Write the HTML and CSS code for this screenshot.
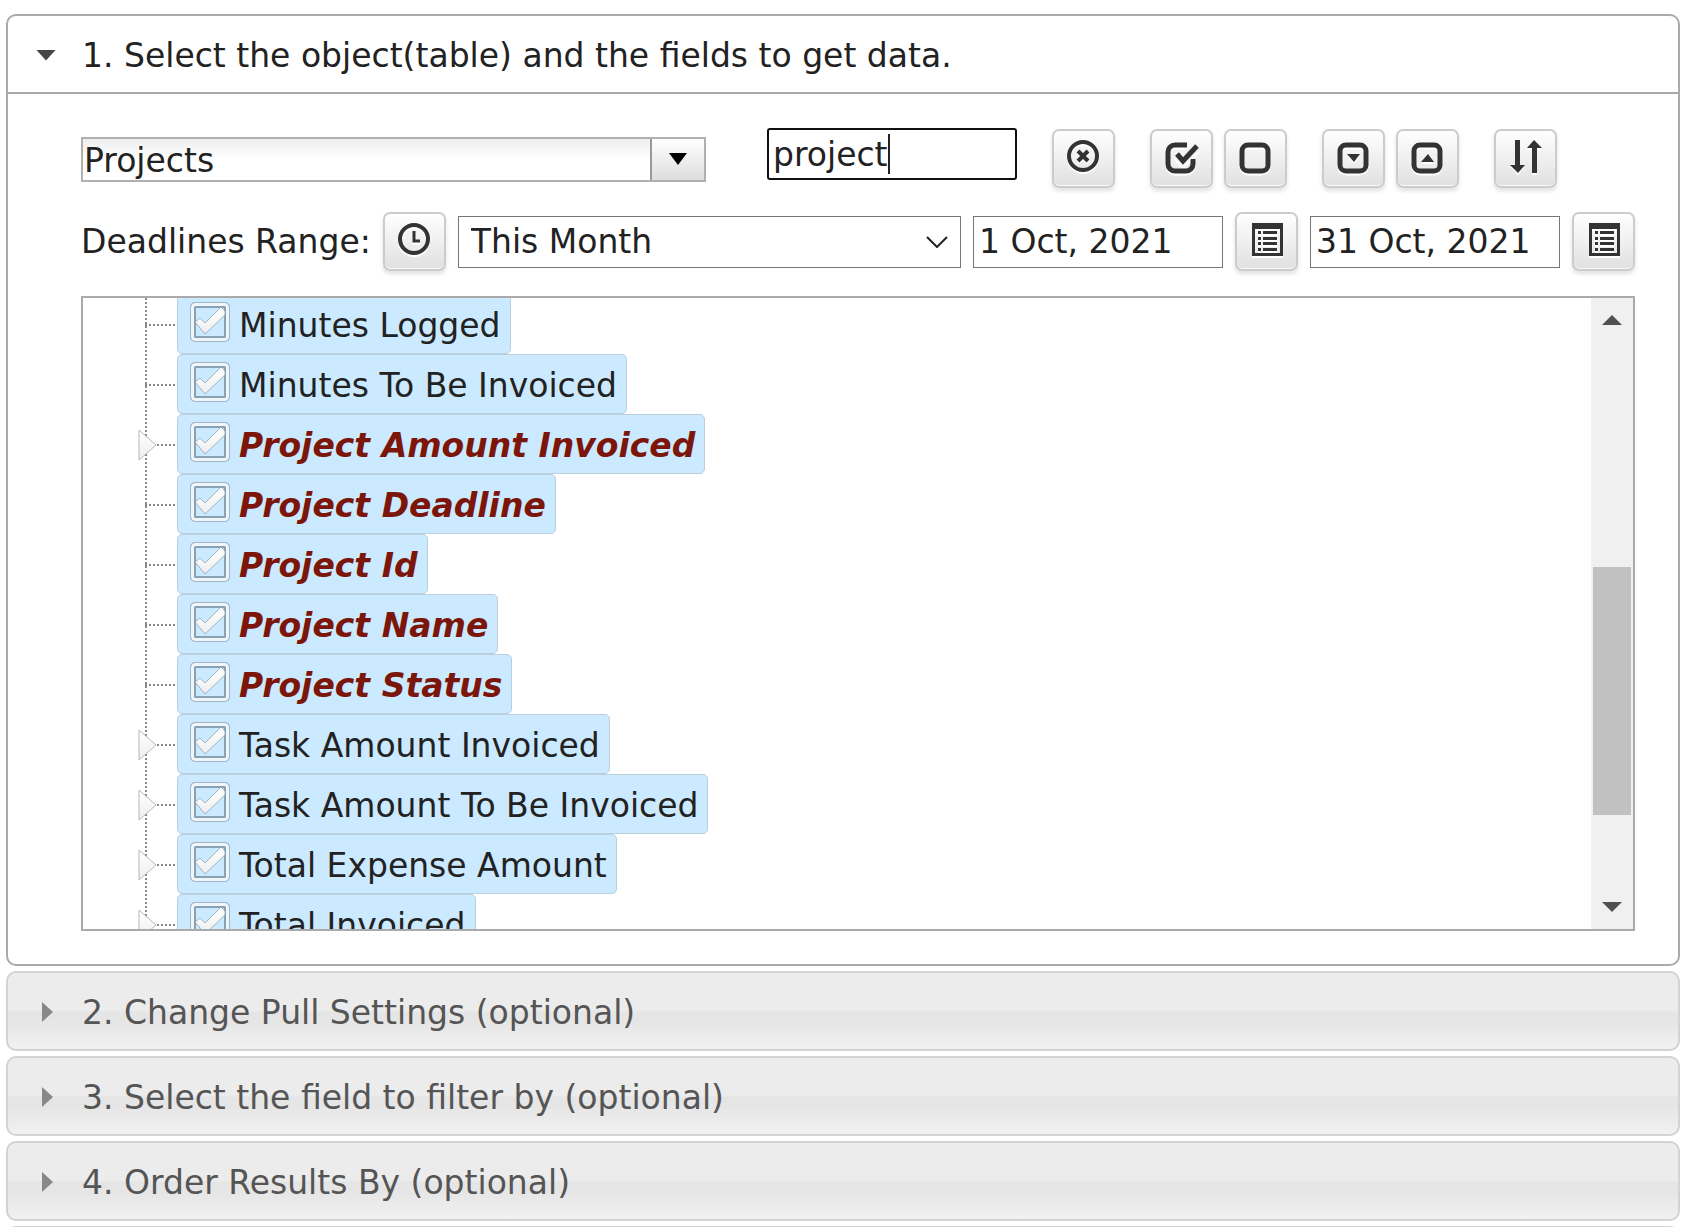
FILE: index.html
```html
<!DOCTYPE html>
<html lang="en">
<head>
    <meta charset="UTF-8">
    <meta name="viewport" content="width=device-width, initial-scale=1.0">
    <title>Get Data</title>
    <link rel="stylesheet" href="styles.css">
</head>
<body>
    <!-- Shared icons -->
    <svg class="sprite" aria-hidden="true">
        <defs>
            <linearGradient id="white-fade" x1="0" y1="0" x2="0" y2="1">
                <stop offset="0" stop-color="#ffffff"/>
                <stop offset="1" stop-color="#eeeeee"/>
            </linearGradient>
        </defs>
        <symbol id="icon-list" viewBox="0 0 36 36">
            <path d="M3 1h31v33H3z M6 7v24h25V7z" fill-rule="evenodd"/>
            <path d="M9 9h3v3H9z M14 9h14v3H14z M9 15h3v3H9z M14 15h14v3H14z M9 20h3v3H9z M14 20h14v3H14z M9 26h3v3H9z M14 26h14v3H14z"/>
        </symbol>
        <symbol id="icon-tick" viewBox="0 0 40 40">
            <rect x="1" y="1" width="38" height="38" rx="4" fill="none" stroke="#6f8899" stroke-opacity="0.5" stroke-width="2"/>
            <rect x="5" y="5" width="30" height="30" fill="none" stroke="#86a2b5" stroke-width="2"/>
            <rect x="2.500" y="2.500" width="35" height="35" rx="3" fill="none" stroke="#f2f5f7" stroke-width="3"/>
            <path d="M5 20l5-4 5 5L31 5l4 4v4L15 32z" fill="url(#white-fade)" stroke="#7f9bae" stroke-opacity="0.7" stroke-width="1"/>
        </symbol>
        <symbol id="icon-expand" viewBox="0 0 20 32">
            <path d="M2 1l17 15L2 31z" fill="url(#white-fade)" stroke="#b8b8b8" stroke-width="1"/>
        </symbol>
    </svg>

    <main class="accordion">
        <section class="panel">
            <h3 class="panel-head"><button type="button" class="head-button" aria-expanded="true"><span class="arrow arrow-down"></span>1. Select the object(table) and the fields to get data.</button></h3>
            <div class="panel-body">
                <div class="row">
                    <div class="combo">
                        <input type="text" class="combo-input" value="Projects" aria-label="Object">
                        <button type="button" class="combo-button" aria-label="Show objects"><span class="combo-arrow"></span></button>
                    </div>
                    <div class="search">
                        <input type="text" class="search-input" value="project" aria-label="Search fields">
                        <span class="caret"></span>
                    </div>
                    <div class="tools">
                        <button type="button" class="tool" aria-label="Clear search">
                            <svg class="icon" viewBox="0 0 36 36"><circle cx="17" cy="17" r="14" fill="none" stroke="#333" stroke-width="4"/><path d="M12 12l10 10M22 12L12 22" stroke="#333" stroke-width="4"/></svg>
                        </button>
                        <div class="tool-group">
                            <button type="button" class="tool" aria-label="Check all">
                                <svg class="icon" viewBox="0 0 36 36"><path d="M23 6H11a7 7 0 0 0-7 7v12a7 7 0 0 0 7 7h11a7 7 0 0 0 7-7v-5" fill="none" stroke="#333" stroke-width="5"/><path d="M13 15l6 7L33 7" fill="none" stroke="#f4f4f4" stroke-width="9"/><path d="M13 15l6 7L33 7" fill="none" stroke="#333" stroke-width="5"/></svg>
                            </button>
                            <button type="button" class="tool" aria-label="Uncheck all">
                                <svg class="icon" viewBox="0 0 36 36"><rect x="4" y="6" width="26" height="26" rx="6" fill="none" stroke="#333" stroke-width="5"/></svg>
                            </button>
                        </div>
                        <div class="tool-group">
                            <button type="button" class="tool" aria-label="Expand all">
                                <svg class="icon" viewBox="0 0 36 36"><rect x="4" y="6" width="26" height="26" rx="6" fill="none" stroke="#333" stroke-width="5"/><path d="M11 15h13l-6 8z"/></svg>
                            </button>
                            <button type="button" class="tool" aria-label="Collapse all">
                                <svg class="icon" viewBox="0 0 36 36"><rect x="4" y="6" width="26" height="26" rx="6" fill="none" stroke="#333" stroke-width="5"/><path d="M11 23h13l-6-8z"/></svg>
                            </button>
                        </div>
                        <button type="button" class="tool" aria-label="Sort">
                            <svg class="icon" viewBox="0 0 36 36"><path d="M7 1h5v25h5L10 34 2 26h5z M24 34h5V9h5L26 1 19 9h5z"/></svg>
                        </button>
                    </div>
                </div>

                <div class="row row-dates">
                    <label class="range-label" for="range">Deadlines Range:</label>
                    <button type="button" class="tool" aria-label="Reset range">
                        <svg class="icon" viewBox="0 0 36 36"><circle cx="18" cy="17" r="14" fill="none" stroke="#333" stroke-width="4"/><path d="M18 9v10h6" fill="none" stroke="#333" stroke-width="3"/></svg>
                    </button>
                    <div class="range-wrap">
                        <select id="range" class="range">
                            <option>This Month</option>
                        </select>
                        <svg class="chevron" viewBox="0 0 22 12"><path d="M1 1l10 10L21 1" fill="none" stroke="#222" stroke-width="2"/></svg>
                    </div>
                    <input type="text" class="date" value="1 Oct, 2021" aria-label="From date">
                    <button type="button" class="tool" aria-label="Pick from date"><svg class="icon"><use href="#icon-list"/></svg></button>
                    <input type="text" class="date" value="31 Oct, 2021" aria-label="To date">
                    <button type="button" class="tool" aria-label="Pick to date"><svg class="icon"><use href="#icon-list"/></svg></button>
                </div>

                <div class="tree">
                    <ul class="fields">
                        <li class="field"><a href="#" class="field-link"><svg class="tick"><use href="#icon-tick"/></svg>Minutes Logged</a></li>
                        <li class="field"><a href="#" class="field-link"><svg class="tick"><use href="#icon-tick"/></svg>Minutes To Be Invoiced</a></li>
                        <li class="field"><svg class="expand"><use href="#icon-expand"/></svg><a href="#" class="field-link found"><svg class="tick"><use href="#icon-tick"/></svg>Project Amount Invoiced</a></li>
                        <li class="field"><a href="#" class="field-link found"><svg class="tick"><use href="#icon-tick"/></svg>Project Deadline</a></li>
                        <li class="field"><a href="#" class="field-link found"><svg class="tick"><use href="#icon-tick"/></svg>Project Id</a></li>
                        <li class="field"><a href="#" class="field-link found"><svg class="tick"><use href="#icon-tick"/></svg>Project Name</a></li>
                        <li class="field"><a href="#" class="field-link found"><svg class="tick"><use href="#icon-tick"/></svg>Project Status</a></li>
                        <li class="field"><svg class="expand"><use href="#icon-expand"/></svg><a href="#" class="field-link"><svg class="tick"><use href="#icon-tick"/></svg>Task Amount Invoiced</a></li>
                        <li class="field"><svg class="expand"><use href="#icon-expand"/></svg><a href="#" class="field-link"><svg class="tick"><use href="#icon-tick"/></svg>Task Amount To Be Invoiced</a></li>
                        <li class="field"><svg class="expand"><use href="#icon-expand"/></svg><a href="#" class="field-link"><svg class="tick"><use href="#icon-tick"/></svg>Total Expense Amount</a></li>
                        <li class="field"><svg class="expand"><use href="#icon-expand"/></svg><a href="#" class="field-link"><svg class="tick"><use href="#icon-tick"/></svg>Total Invoiced</a></li>
                    </ul>
                    <div class="scrollbar">
                        <span class="scroll-arrow scroll-up"></span>
                        <div class="scroll-track"><div class="scroll-thumb"></div></div>
                        <span class="scroll-arrow scroll-down"></span>
                    </div>
                </div>
            </div>
        </section>

        <h3 class="closed"><button type="button" class="head-button" aria-expanded="false"><span class="arrow arrow-right"></span>2. Change Pull Settings (optional)</button></h3>
        <h3 class="closed"><button type="button" class="head-button" aria-expanded="false"><span class="arrow arrow-right"></span>3. Select the field to filter by (optional)</button></h3>
        <h3 class="closed"><button type="button" class="head-button" aria-expanded="false"><span class="arrow arrow-right"></span>4. Order Results By (optional)</button></h3>
        <h3 class="closed"><button type="button" class="head-button" aria-expanded="false"><span class="arrow arrow-right"></span></button></h3>
    </main>
</body>
</html>
```

FILE: styles.css
```css
* {
    box-sizing: border-box;
}

html {
    height: 100%;
    overflow: hidden;
}

body {
    height: 100%;
    margin: 0;
    overflow: hidden;
    background: #ffffff;
    color: #222222;
    font-family: Verdana, "DejaVu Sans", sans-serif;
    font-size: 33px;
}

button, input, select {
    font: inherit;
    color: inherit;
}

.sprite {
    position: absolute;
    width: 0;
    height: 0;
}

/* Accordion */
.accordion {
    display: flex;
    flex-direction: column;
    gap: 5px;
    padding: 14px 8px 0 6px;
}

.panel {
    border: 2px solid #aaaaaa;
    border-radius: 10px;
}

.panel-head, .closed {
    margin: 0;
    font-size: 33px;
    font-weight: normal;
}

.panel-head {
    border-bottom: 2px solid #aaaaaa;
}

.head-button {
    display: flex;
    align-items: center;
    width: 100%;
    height: 76px;
    padding: 2px 0 0 28px;
    border: none;
    background: none;
    text-align: left;
}

.closed {
    border: 2px solid #d3d3d3;
    border-radius: 10px;
    background: linear-gradient(#ececec 0, #ececec 49%, #e5e5e5 52%, #e6e6e6 65%, #f1f1f1 100%);
    color: #555555;
}

.arrow {
    flex: none;
    width: 46px;
}

.arrow::before {
    content: "";
    display: block;
}

.arrow-down::before {
    width: 20px;
    height: 11px;
    background: #454545;
    clip-path: polygon(0 0, 100% 0, 50% 100%);
}

.arrow-right::before {
    width: 11px;
    height: 20px;
    margin-left: 6px;
    background: #888888;
    clip-path: polygon(0 0, 100% 50%, 0 100%);
}

/* Form rows */
.panel-body {
    padding: 34px 43px 33px 73px;
}

.row {
    display: flex;
    align-items: center;
}

.combo {
    display: flex;
    flex: 0 1 625px;
    min-width: 0;
    height: 45px;
    margin-top: 2px;
    border: 2px solid #b0b0b0;
}

.combo-input {
    flex: 1;
    min-width: 0;
    padding: 2px 1px 0;
    border: none;
    background: linear-gradient(#eeeeee, #ffffff 50%);
}

.combo-button {
    display: flex;
    align-items: center;
    justify-content: center;
    width: 54px;
    padding: 0;
    border: none;
    border-left: 2px solid #999999;
    background: linear-gradient(#ffffff, #dddddd);
}

.combo-arrow {
    width: 18px;
    height: 12px;
    background: #000000;
    clip-path: polygon(0 0, 100% 0, 50% 100%);
}

.search {
    position: relative;
    margin: 0 35px 8px 61px;
}

.search-input {
    display: block;
    width: 250px;
    height: 52px;
    padding: 0 4px;
    border: 2px solid #101010;
    border-radius: 3px;
    outline: none;
}

/* Text cursor in the focused search box */
.caret {
    position: absolute;
    top: 6px;
    left: 121px;
    width: 2px;
    height: 40px;
    background: #222222;
}

.tools {
    display: flex;
    gap: 35px;
}

.tool-group {
    display: flex;
    gap: 11px;
}

.tool {
    display: flex;
    flex: none;
    justify-content: center;
    width: 63px;
    height: 59px;
    padding: 8px 0 0;
    border: 2px solid #cccccc;
    border-radius: 7px;
    background: linear-gradient(#ffffff, #e0e0e0);
    box-shadow: inset 0 -1px 0 #fafafa, 0 3px 4px rgba(0, 0, 0, 0.12);
}

.icon {
    width: 36px;
    height: 36px;
    fill: #333333;
    filter: drop-shadow(0 2px 0 #ffffff);
}

.row-dates {
    gap: 12px;
    margin-top: 24px;
}

.range-label {
    white-space: nowrap;
}

.range-wrap {
    position: relative;
    flex: 1;
    min-width: 0;
}

.range {
    display: block;
    width: 100%;
    height: 52px;
    padding: 0 12px;
    border: 1px solid #767676;
    border-radius: 0;
    appearance: none;
    background: #ffffff;
}

.chevron {
    position: absolute;
    top: 20px;
    right: 13px;
    width: 22px;
    height: 12px;
    pointer-events: none;
}

.date {
    width: 250px;
    height: 52px;
    padding: 0 5px;
    border: 1px solid #767676;
    border-radius: 0;
}

/* Field tree */
.tree {
    display: flex;
    height: 635px;
    margin-top: 25px;
    border: 2px solid #aaaaaa;
    overflow: hidden;
}

.fields {
    flex: 1;
    margin: -4px 0 0;
    padding: 0 0 0 62px;
    list-style: none;
}

.field {
    position: relative;
    display: flex;
    height: 60px;
    padding-left: 32px;
    background:
        repeating-linear-gradient(#888888 0 2px, transparent 2px 4px) 0 0 / 2px 100% no-repeat,
        repeating-linear-gradient(90deg, #888888 0 2px, transparent 2px 4px) 0 30px / 32px 2px no-repeat;
}

.field-link {
    display: flex;
    align-items: center;
    height: 60px;
    padding: 2px 9px 0 12px;
    border: 1px solid #bbcedb;
    border-radius: 5px;
    background: #cbe9ff;
    color: #222222;
    text-decoration: none;
    white-space: nowrap;
}

.found {
    color: #7c160b;
    font-weight: bold;
    font-style: italic;
}

.tick {
    flex: none;
    width: 40px;
    height: 40px;
    margin: 0 9px 6px 0;
}

/* Sits over the dotted line */
.expand {
    position: absolute;
    top: 15px;
    left: -8px;
    width: 20px;
    height: 32px;
}

.scrollbar {
    display: flex;
    flex-direction: column;
    align-items: center;
    width: 42px;
    padding: 17px 2px;
    background: #f0f0f0;
}

.scroll-arrow {
    width: 20px;
    height: 10px;
    background: #505050;
}

.scroll-up {
    clip-path: polygon(50% 0, 100% 100%, 0 100%);
}

.scroll-down {
    clip-path: polygon(0 0, 100% 0, 50% 100%);
}

.scroll-track {
    flex: 1;
    width: 100%;
    padding-top: 242px;
}

.scroll-thumb {
    height: 248px;
    background: #c1c1c1;
}
```
